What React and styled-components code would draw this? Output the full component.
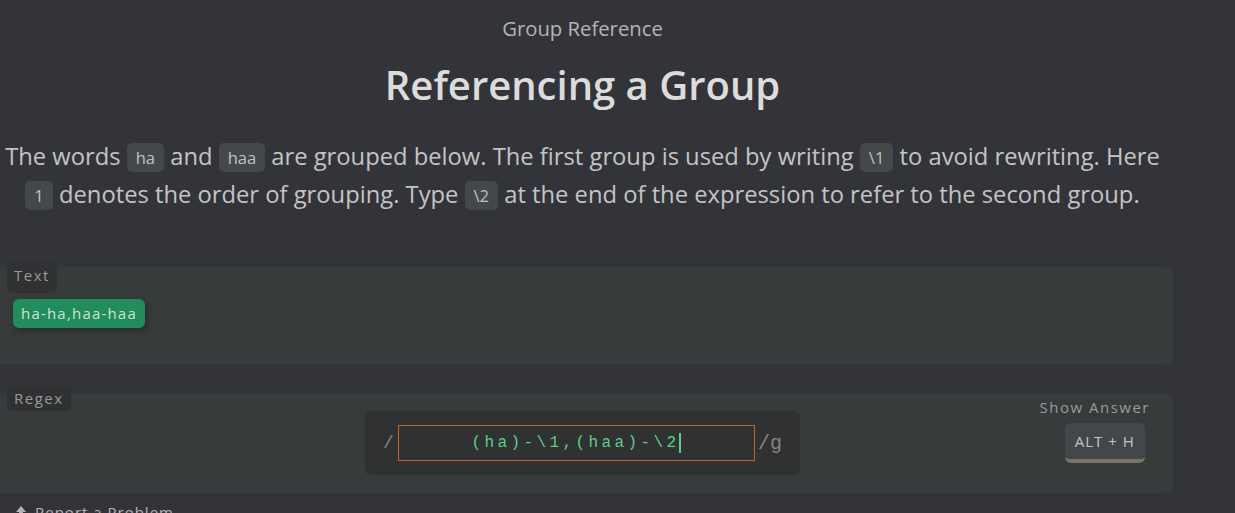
import React from 'react'
import styled, { createGlobalStyle } from 'styled-components';

const GlobalStyle = createGlobalStyle`
body{
    margin: 0;
    background-color: #333439;
    font-family: "Open Sans", "Liberation Sans", sans-serif;
    overflow: hidden;
}
`;

const App = () => {
    return (
        <Page>
            <GlobalStyle/>
            <Subtitle>Group Reference</Subtitle>
            <Title>Referencing a Group</Title>
            <Description>
                The words <Code>ha</Code> and <Code>haa</Code> are grouped below. The first group is used by writing <Code>\1</Code> to avoid rewriting. Here <Code>1</Code> denotes the order of grouping. Type <Code>\2</Code> at the end of the expression to refer to the second group.
            </Description>

            <Panel $top={54} $height={97}>
                <Label $tall>Text</Label>
                <Content>
                    <Match>ha-ha,haa-haa</Match>
                </Content>
            </Panel>

            <Panel $top={29} $height={100}>
                <Label>Regex</Label>
                <RegexRow>
                    <span/>
                    <InputBox>
                        <Slash>/</Slash>
                        <Field>
                            <span>(ha)-\1,(haa)-\2</span>
                            <Caret/>
                        </Field>
                        <Slash $big>/g</Slash>
                    </InputBox>
                    <Answer>
                        <span>Show Answer</span>
                        <Key>ALT + H</Key>
                    </Answer>
                </RegexRow>
            </Panel>

            <Report>
                <svg width="12" height="14" viewBox="0 0 12 14">
                    <path d="M6 1 L11 7 H8 V13 H4 V7 H1 Z" fill="#b4b4b4"/>
                </svg>
                <span>Report a Problem</span>
            </Report>
        </Page>
    )
}

export default App;

const Page = styled.div`
width: 1165px;
padding-top: 15px;
text-align: center;
`;

const Subtitle = styled.div`
font-size: 20.3px;
line-height: 26px;
color: #b4b4b4;
`;

const Title = styled.h1`
margin: 20px 0 0;
font-size: 40px;
line-height: 48px;
font-weight: 600;
color: #dcdcdc;
`;

const Description = styled.p`
margin: 28px 0 0;
font-size: 23.75px;
line-height: 38px;
color: #c4c4c4;
`;

const Code = styled.span`
display: inline-block;
background-color: #45484b;
border-radius: 5px;
padding: 0 9px;
font-size: 16.5px;
line-height: 29px;
color: #c0c0c0;
vertical-align: 1px;
`;

const Panel = styled.div`
display: flow-root;
margin: ${p => p.$top}px -8px 0;
height: ${p => p.$height}px;
background-color: #383b3c;
border-radius: 8px;
text-align: left;
padding-left: 15px;
box-sizing: border-box;
`;

const Label = styled.div`
width: fit-content;
margin-top: -7px;
padding: 0 7px;
height: ${p => p.$tall ? 33 : 25}px;
line-height: ${p => p.$tall ? 30 : 25}px;
border-radius: 6px;
background-color: #2f3132;
color: #9a9a9a;
font-size: 15px;
letter-spacing: 1.5px;
`;

const Content = styled.div`
padding: 6px 0 0 6px;
`;

const Match = styled.span`
display: inline-block;
background-color: #218c5c;
color: #cfe3d6;
border-radius: 6px;
padding: 0 8px;
height: 29px;
line-height: 29px;
font-size: 15px;
letter-spacing: 1.2px;
box-shadow: 2px 3px 6px rgba(0, 0, 0, 0.3);
`;

const RegexRow = styled.div`
display: grid;
grid-template-columns: 1fr auto 1fr;
align-items: start;
margin-left: -15px;
`;

const InputBox = styled.div`
display: flex;
align-items: center;
justify-content: center;
width: 435px;
height: 64px;
box-sizing: border-box;
background-color: #2f3132;
border-radius: 6px;
`;

const Slash = styled.span`
font-family: "Liberation Mono", monospace;
font-size: ${p => p.$big ? 20 : 18}px;
color: #858585;
`;

const Field = styled.div`
width: 357px;
height: 36px;
box-sizing: border-box;
margin: 0 3px 0 4px;
border: 1px solid #c0672a;
display: flex;
align-items: center;
justify-content: center;
font-family: "Liberation Mono", monospace;
font-size: 16px;
letter-spacing: 3.4px;
color: #5ecf8a;
`;

const Caret = styled.span`
display: inline-block;
width: 2px;
height: 20px;
background-color: #5ecf8a;
`;

const Answer = styled.div`
justify-self: end;
margin-right: 23px;
margin-top: -14px;
display: flex;
flex-direction: column;
align-items: center;
color: #9a9a9a;
font-size: 15px;
letter-spacing: 1.5px;
`;

const Key = styled.div`
margin-top: 6px;
margin-left: 20px;
padding: 0 10px;
height: 36px;
line-height: 37px;
background-color: #44474a;
border-bottom: 4px solid #7a7468;
border-radius: 6px;
color: #c4c4c4;
font-size: 15px;
letter-spacing: 1px;
`;

const Report = styled.div`
display: flex;
align-items: center;
gap: 8px;
margin-top: 9px;
padding-left: 15px;
color: #b4b4b4;
font-size: 15px;
letter-spacing: 1px;
`;
